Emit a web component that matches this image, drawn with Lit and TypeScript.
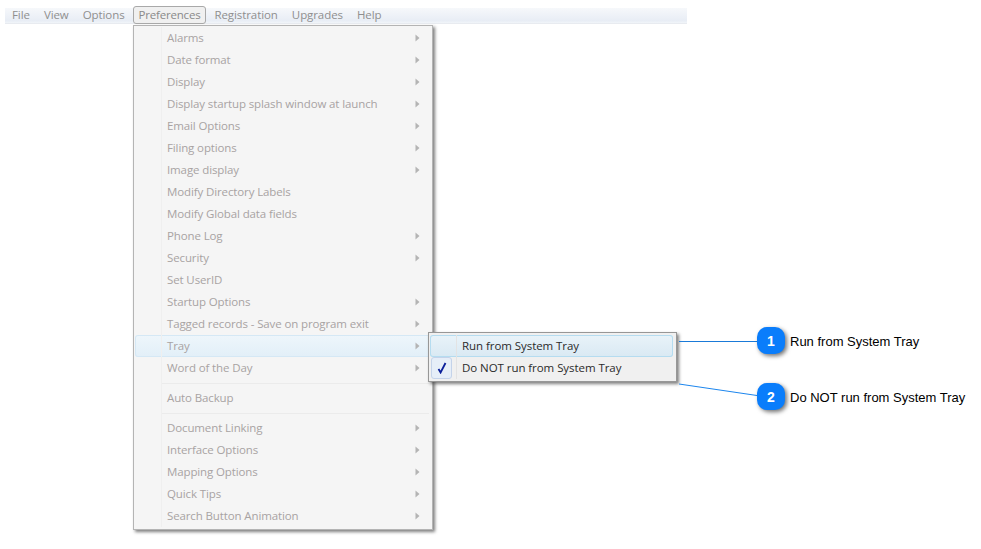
import { LitElement, html, css, svg } from "lit";
import { customElement } from "lit/decorators.js";

type Item = { t: string; arrow?: boolean; hot?: boolean } | "sep";
const items: Item[] = [
  { t: "Alarms", arrow: true },
  { t: "Date format", arrow: true },
  { t: "Display", arrow: true },
  { t: "Display startup splash window at launch", arrow: true },
  { t: "Email Options", arrow: true },
  { t: "Filing options", arrow: true },
  { t: "Image display", arrow: true },
  { t: "Modify Directory Labels" },
  { t: "Modify Global data fields" },
  { t: "Phone Log", arrow: true },
  { t: "Security", arrow: true },
  { t: "Set UserID" },
  { t: "Startup Options", arrow: true },
  { t: "Tagged records - Save on program exit", arrow: true },
  { t: "Tray", arrow: true, hot: true },
  { t: "Word of the Day", arrow: true },
  "sep",
  { t: "Auto Backup" },
  "sep",
  { t: "Document Linking", arrow: true },
  { t: "Interface Options", arrow: true },
  { t: "Mapping Options", arrow: true },
  { t: "Quick Tips", arrow: true },
  { t: "Search Button Animation", arrow: true },
];
const bar = ["File", "View", "Options", "Preferences", "Registration", "Upgrades", "Help"];

@customElement("app-root")
export class AppRoot extends LitElement {
  static styles = css`
    :host { display: block; position: relative; width: 981px; height: 549px; background: #fff; overflow: hidden;
      font-family: "Open Sans", "Noto Sans", sans-serif; font-size: 11.5px; letter-spacing: -0.12px; }
    .bar { display: flex; align-items: center; margin: 8px 0 0 5px; width: 682px; height: 16px; padding-bottom: 2px;
      box-sizing: border-box; background: linear-gradient(#f6f8fb, #e8edf5 85%, #f2f5f9); border-bottom: 1px solid #e8ebf0;
      letter-spacing: -0.08px; }
    .bar span { color: #8f8f8f; padding: 0 7px; line-height: 14px; white-space: nowrap; flex: none; }
    .bar span.open { color: #8a8a8a; border: 1px solid #a9a9a9; border-radius: 3px; background: #f0f0f0; height: 18px; line-height: 16px;
      box-sizing: border-box; padding: 0 5px; margin: 0 1px; letter-spacing: -0.2px; }
    .menu { position: absolute; box-sizing: border-box; background: #f5f5f5; border: 1px solid #b4b4b4;
      box-shadow: 2px 2px 3px rgba(60,60,60,.65); }
    .main { left: 133px; top: 25px; width: 300px; height: 505px; padding: 1px 1px 0 1px; }
    .sub { left: 428px; top: 332px; width: 249px; height: 50px; padding: 2px 3px 2px 1px; border-color: #979797; background: #f0f0f0; letter-spacing: -0.06px; }
    .row { position: relative; display: flex; align-items: center; height: 22px; padding-left: 32px; box-sizing: border-box;
      color: #a8a3a3; line-height: 22px; white-space: nowrap; }
    .row::before { content: ""; position: absolute; left: 26px; top: 0; bottom: 0; width: 1px; background: #efefef; }
    .row.hot { background: linear-gradient(#eef6fb, #e2eff8); box-shadow: inset 0 0 0 1px #d5e8f5; border-radius: 3px; }
    .arrow { position: absolute; right: 11px; top: 7px; width: 5px; height: 8px; }
    .sep { position: relative; height: 8px; }
    .sep::before { content: ""; position: absolute; left: 26px; top: 0; bottom: 0; width: 1px; background: #efefef; }
    .sep::after { content: ""; position: absolute; left: 27px; right: 2px; top: 4px; height: 1px; background: #ebebeb; }
    .sub .row { color: #2b2b2b; }
    .sub .row.hot { background: linear-gradient(#e9f3f9, #d9e9f3); box-shadow: inset 0 0 0 1px #b5dcf0; }
    .sub .row::before { left: 26px; background: #e3e3e3; }
    .check { position: absolute; left: 1px; top: 0; width: 21px; height: 22px; box-sizing: border-box;
      border: 1px solid #c4d3ea; border-radius: 3px; background: #e6eef8; display: flex; align-items: center; justify-content: center; }
    .lines { position: absolute; left: 0; top: 0; width: 981px; height: 549px; pointer-events: none; }
    .badge { position: absolute; left: 757px; width: 28px; height: 27px; border-radius: 10px; background: #0a7dfb;
      box-shadow: 2px 2px 4px rgba(0,0,0,.55); color: #fff; font: bold 14px "Liberation Sans", Arial, sans-serif; letter-spacing: 0;
      display: flex; align-items: center; justify-content: center; }
    .b1 { top: 327px; }
    .b2 { top: 383px; }
    .note { position: absolute; left: 790px; font: 13px/16px "Liberation Sans", Arial, sans-serif; letter-spacing: 0; color: #000; white-space: nowrap; }
    .n1 { top: 334px; }
    .n2 { top: 390px; }
  `;

  arrow() {
    return html`<svg class="arrow" viewBox="0 0 5 8">${svg`<path d="M0.5 0.5 L4.5 4 L0.5 7.5 Z" fill="#b4b4b4"/>`}</svg>`;
  }

  render() {
    return html`
      <div class="bar">${bar.map((b) => html`<span class=${b === "Preferences" ? "open" : ""}>${b}</span>`)}</div>
      <div class="menu main">
        ${items.map((i) =>
          i === "sep"
            ? html`<div class="sep"></div>`
            : html`<div class="row ${i.hot ? "hot" : ""}">${i.t}${i.arrow ? this.arrow() : ""}</div>`
        )}
      </div>
      <div class="menu sub">
        <div class="row hot">Run from System Tray</div>
        <div class="row">
          <span class="check"><svg width="10" height="12" viewBox="0 0 10 12"><path d="M1.5 7 L3.6 10.5 L8.5 1" fill="none" stroke="#0b1f9a" stroke-width="1.8"/></svg></span>
          Do NOT run from System Tray
        </div>
      </div>
      <svg class="lines" viewBox="0 0 981 549">
        <line x1="679" y1="341.5" x2="757" y2="341.5" stroke="#1a7ad8" stroke-width="1"/>
        <line x1="679" y1="384" x2="757" y2="395.5" stroke="#1c86ee" stroke-width="1"/>
      </svg>
      <div class="badge b1">1</div><div class="note n1">Run from System Tray</div>
      <div class="badge b2">2</div><div class="note n2">Do NOT run from System Tray</div>
    `;
  }
}
